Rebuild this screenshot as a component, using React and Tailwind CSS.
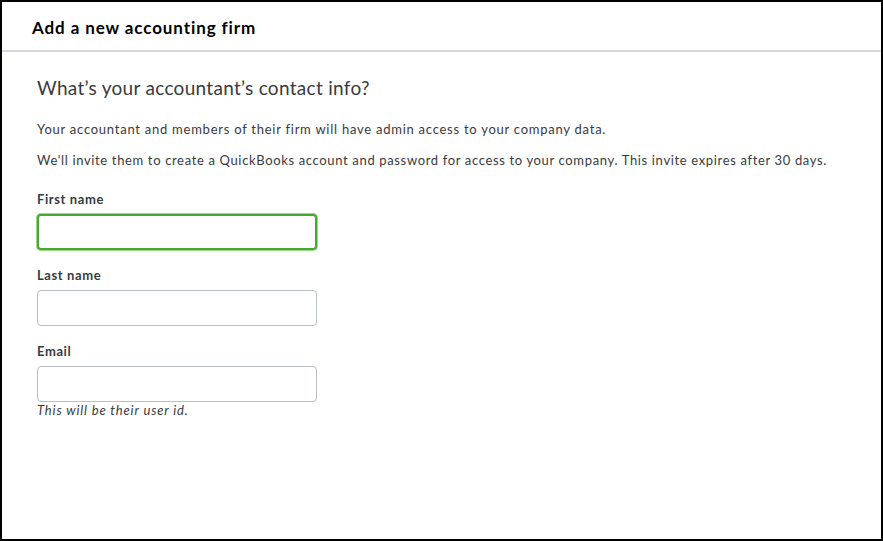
import React from 'react';

const fields = [
  { id: 'first', label: 'First name', focused: true },
  { id: 'last', label: 'Last name' },
  { id: 'email', label: 'Email', hint: 'This will be their user id.' },
];

const App = () => {
  return (
    <div className="w-full h-[541px] bg-white border-2 border-black flex flex-col font-['Lato','Open_Sans',sans-serif] text-[#393a3d]">
      {/* Titre */}
      <header className="h-[50px] flex items-center pl-[30px] pt-[3px] border-b-2 border-[#d4d7dc]">
        <h1 className="text-[17px] font-bold text-black tracking-[0.9px]">Add a new accounting firm</h1>
      </header>

      <main className="flex-1 pl-[35px] pt-[23px]">
        <h2 className="text-[19px] leading-[26px] tracking-[0.3px]">What’s your accountant’s contact info?</h2>
        <p className="text-[13px] leading-[20px] mt-[18px] tracking-[0.75px]">
          Your accountant and members of their firm will have admin access to your company data.
        </p>
        <p className="text-[13px] leading-[20px] mt-[11px] tracking-[0.65px]">
          We'll invite them to create a QuickBooks account and password for access to your company. This invite expires after 30 days.
        </p>

        <div className="mt-[20px] flex flex-col gap-[16px]">
          {fields.map(f => (
            <div key={f.id} className="flex flex-col">
              <label className="text-[13px] leading-[18px] font-bold tracking-[0.6px]">{f.label}</label>
              <input
                type="text"
                className={`mt-[6px] w-[280px] h-[36px] rounded-[4px] bg-white outline-none px-2 ${f.focused ? 'border-2 border-[#4aa832] shadow-[0_0_0_1px_#9ad88a]' : 'border border-[#babec5]'}`}
              />
              {f.hint && <span className="text-[13px] leading-[16px] italic tracking-[0.85px]">{f.hint}</span>}
            </div>
          ))}
        </div>
      </main>
    </div>
  );
};

export default App;
